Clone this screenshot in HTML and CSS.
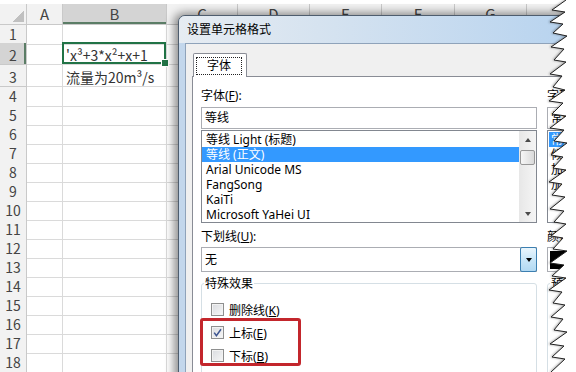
FILE: index.html
```html
<!DOCTYPE html>
<html lang="zh-CN">
<head>
<meta charset="UTF-8" />
<meta name="viewport" content="width=device-width, initial-scale=1" />
<title>设置单元格格式</title>
<link rel="stylesheet" href="styles.css">
</head>
<body>

<div class="sheet">
  <div class="row head">
    <div class="corner"></div><div>A</div><div class="sel-col">B</div><div>C</div><div>D</div><div>E</div><div>F</div><div>G</div><div></div>
  </div>
  <div class="row r1"><div class="rh">1</div><div></div><div></div><div></div></div>
  <div class="row r2"><div class="rh sel-row">2</div><div></div><div class="cell active">'x³+3*x²+x+1</div><div></div></div>
  <div class="row r3"><div class="rh">3</div><div></div><div class="cell">流量为20m³/s</div><div></div></div>
  <div class="row"><div class="rh">4</div><div></div><div></div><div></div></div>
  <div class="row"><div class="rh">5</div><div></div><div></div><div></div></div>
  <div class="row"><div class="rh">6</div><div></div><div></div><div></div></div>
  <div class="row"><div class="rh">7</div><div></div><div></div><div></div></div>
  <div class="row"><div class="rh">8</div><div></div><div></div><div></div></div>
  <div class="row"><div class="rh">9</div><div></div><div></div><div></div></div>
  <div class="row"><div class="rh">10</div><div></div><div></div><div></div></div>
  <div class="row"><div class="rh">11</div><div></div><div></div><div></div></div>
  <div class="row"><div class="rh">12</div><div></div><div></div><div></div></div>
  <div class="row"><div class="rh">13</div><div></div><div></div><div></div></div>
  <div class="row"><div class="rh">14</div><div></div><div></div><div></div></div>
  <div class="row"><div class="rh">15</div><div></div><div></div><div></div></div>
  <div class="row"><div class="rh">16</div><div></div><div></div><div></div></div>
  <div class="row"><div class="rh">17</div><div></div><div></div><div></div></div>
  <div class="row"><div class="rh">18</div><div></div><div></div><div></div></div>
</div>

<section class="dialog">
  <div class="titlebar">设置单元格格式</div>
  <div class="client">
    <div class="tabs"><div class="tab"><span class="focus">字体</span></div></div>
    <div class="panel">
      <div class="col col-main">
        <div class="lbl">字体(<u>F</u>):</div>
        <div class="field">等线</div>
        <div class="listbox">
          <ul class="items">
            <li>等线 Light (标题)</li>
            <li class="on">等线 (正文)</li>
            <li>Arial Unicode MS</li>
            <li>FangSong</li>
            <li>KaiTi</li>
            <li>Microsoft YaHei UI</li>
          </ul>
          <div class="vscroll">
            <span class="btn"><span class="arrow up"></span></span>
            <span class="thumb"></span>
            <span class="btn end"><span class="arrow down"></span></span>
          </div>
        </div>
        <div class="lbl gap">下划线(<u>U</u>):</div>
        <div class="combo"><span class="value">无</span><span class="drop"></span></div>
        <fieldset class="group">
          <legend>特殊效果</legend>
          <div class="check"><span class="box"></span><span>删除线(<u>K</u>)</span></div>
          <div class="mark">
            <div class="check">
              <span class="box">
                <svg viewBox="0 0 11 11" width="11" height="11"><path d="M2.2 5.6 L4.4 8.6 L9 2.2" fill="none" stroke="#3d5590" stroke-width="1.5"/></svg>
              </span><span>上标(<u>E</u>)</span>
            </div>
            <div class="check"><span class="box"></span><span>下标(<u>B</u>)</span></div>
          </div>
        </fieldset>
      </div>
      <div class="col col-side">
        <div class="lbl">字形(<u>O</u>):</div>
        <div class="field">常规</div>
        <div class="listbox">
          <ul class="items">
            <li class="on">常规</li>
            <li>倾斜</li>
            <li>加粗</li>
            <li>加粗 倾斜</li>
          </ul>
        </div>
        <div class="lbl gap">颜色(<u>C</u>):</div>
        <div class="combo"><span class="swatch"></span></div>
        <fieldset class="group">
          <legend>预览</legend>
        </fieldset>
      </div>
    </div>
  </div>
</section>

<!-- torn paper edge on the right -->
<svg class="tear" width="576" height="372" viewBox="0 0 576 372">
  <polygon points="566,-5 566,0 552,10 565,12 550,22 563,24 553,33 567,36 551,47 564,49 554,60 566,62 550,74 562,76 553,87 565,90 549,101 563,103 552,114 566,116 550,128 564,130 554,141 567,143 551,155 563,157 553,168 566,170 549,182 562,184 552,195 565,197 550,209 564,211 554,222 566,224 551,236 563,238 553,249 567,251 550,263 564,265 552,276 566,278 549,290 562,292 553,303 565,305 551,317 563,319 554,330 567,332 550,344 564,346 552,357 565,359 551,372 551,380 590,380 590,-5" fill="#fff" stroke="#222" stroke-width="1"/>
</svg>

</body>
</html>
```

FILE: styles.css
```css
* { box-sizing: border-box; }
body {
  margin: 0;
  width: 576px;
  height: 372px;
  overflow: hidden;
  position: relative;
  background: #fff;
  font-family: "Noto Sans CJK SC", sans-serif;
}

/* worksheet */
.sheet {
  padding-top: 4px;
  font-size: 14px;
  color: #333;
}
.row {
  display: grid;
  grid-template-columns: 27px 36px 104px 71px;
  height: 19px;
}
.row > div {
  border-right: 1px solid #dadada;
  border-bottom: 1px solid #dadada;
  line-height: 19px;
  white-space: nowrap;
}
.row.head {
  grid-template-columns: 27px 36px 104px 71px 72px 72px 73px 72px 72px;
  height: 21px;
  background: #f2f2f2;
}
.row.head > div {
  text-align: center;
  color: #444;
  font-size: 15px;
  line-height: 20px;
  border-color: #c9c9c9;
}
.row.head > .sel-col {
  background: #d4d4d4;
  box-shadow: inset 0 -2px 0 #5b7d66;
}
.corner {
  background: linear-gradient(to bottom right, transparent 50%, #c0c0c0 50%) no-repeat right 2px bottom 2px / 11px 12px;
}
.r1 { height: 18px; }
.r2, .r3 { height: 22px; }
.row > .rh {
  background: #f2f2f2;
  color: #444;
  text-align: center;
  border-color: #c9c9c9;
}
.r2 > div, .r3 > div {
  padding-top: 3px;
  line-height: 18px;
}
.row > .sel-row {
  background: #d4d4d4;
  box-shadow: inset -2px 0 0 #5b7d66;
}
.cell {
  padding-left: 3px;
  color: #333;
}
.active { position: relative; }
.active::before {
  content: "";
  position: absolute;
  left: -1px; top: -1px; right: 0; bottom: 0;
  border: 2px solid #217346;
}
.active::after {
  content: "";
  position: absolute;
  right: -3px; bottom: -3px;
  width: 6px; height: 6px;
  background: #217346;
  border: 1px solid #fff;
}

/* format cells dialog */
.dialog {
  position: absolute;
  left: 178px;
  top: 15px;
  width: 400px;
  height: 380px;
  padding-left: 6px;
  border: 1px solid #4e5d6e;
  border-radius: 7px 7px 0 0;
  background: #c3d7ec;
  box-shadow: -2px 0 10px 2px rgba(0, 0, 0, 0.45);
  font-family: "Noto Sans", "Noto Sans CJK SC", sans-serif;
  font-size: 12px;
  color: #000;
}
.titlebar {
  height: 27px;
  margin-left: -6px;
  padding-left: 8px;
  line-height: 28px;
  border-radius: 6px 6px 0 0;
  background: linear-gradient(to right, #e6ecf2, #d6e3f0 35%, #b7d3ef);
}
.client {
  height: 360px;
  padding: 9px 0 0 6px;
  background: #f0f0f0;
  border-top: 1px solid #8fa3ba;
  border-left: 1px solid #8fa3ba;
}
.tabs {
  display: flex;
  height: 23px;
}
.tab {
  position: relative;
  z-index: 1;
  height: 24px;
  margin-left: 1px;
  padding: 3px 4px 0 2px;
  background: #fff;
  border: 1px solid #898c95;
  border-bottom: 0;
  border-radius: 2px 2px 0 0;
}
.focus {
  display: block;
  padding: 0 10px;
  line-height: 16px;
  border: 1px dotted #222;
}
.panel {
  display: flex;
  gap: 10px;
  height: 320px;
  padding: 10px 0 0 8px;
  background: #fff;
  border: 1px solid #898c95;
  border-right: 0;
}
.col-main { width: 336px; flex: none; }
.col-side { width: 21px; flex: none; overflow: hidden; }

.lbl {
  height: 17px;
  line-height: 17px;
  white-space: nowrap;
}
.lbl.gap { margin-top: 5px; }
.field {
  margin-top: 3px;
  height: 22px;
  padding-left: 3px;
  line-height: 20px;
  border: 1px solid #abadb3;
  white-space: nowrap;
}
.col-side .field,
.col-side .listbox,
.col-side .combo,
.col-side .group { width: 60px; }
.listbox {
  display: flex;
  margin-top: 1px;
  height: 93px;
  border: 1px solid #828790;
}
.items {
  flex: 1;
  list-style: none;
  margin: 0;
  padding: 1px 0 0;
}
.items li {
  height: 15px;
  padding-left: 4px;
  line-height: 15px;
  white-space: nowrap;
}
.items li.on {
  background: #3399ff;
  color: #fff;
}
.col-side .items { padding: 1px 0 0 1px; }
.col-side .items li { padding-left: 2px; }
.vscroll {
  display: flex;
  flex-direction: column;
  align-items: center;
  width: 17px;
  background: linear-gradient(to right, #e7e7e7, #f5f5f5);
}
.btn {
  display: flex;
  align-items: center;
  justify-content: center;
  width: 17px;
  height: 17px;
}
.btn.end { margin-top: auto; }
.arrow {
  width: 0;
  height: 0;
  border-left: 3.5px solid transparent;
  border-right: 3.5px solid transparent;
}
.arrow.up { border-bottom: 4px solid #4a4a4a; }
.arrow.down { border-top: 4px solid #4a4a4a; }
.thumb {
  width: 15px;
  height: 15px;
  margin-top: 2px;
  border: 1px solid #979797;
  border-radius: 2px;
  background: linear-gradient(to right, #f6f6f6, #dadada);
}

.combo {
  display: flex;
  margin-top: 2px;
  height: 25px;
  border: 1px solid #abadb3;
}
.combo .value {
  flex: 1;
  padding-left: 3px;
  line-height: 23px;
}
.combo .drop {
  display: flex;
  align-items: center;
  justify-content: center;
  width: 17px;
  margin: -1px -1px -1px auto;
  border: 1px solid #3c7fb1;
  border-radius: 2px;
  background: linear-gradient(#eaf6fd, #c9e6f8 50%, #b2d9f2);
}
.combo .drop::before {
  content: "";
  border-left: 3.5px solid transparent;
  border-right: 3.5px solid transparent;
  border-top: 4px solid #000;
}
.combo .swatch {
  width: 40px;
  margin: 3px 2px 2px;
  background: #000;
}

.group {
  min-width: 0;
  height: 120px;
  margin: 3px 0 0;
  padding: 6px 8px 0 3px;
  border: 1px solid #d5dfe5;
  border-radius: 3px;
}
.group legend {
  margin-left: -1px;
  padding: 0 1px;
  line-height: 17px;
}
.check {
  display: flex;
  align-items: center;
  gap: 5px;
  height: 23px;
  padding-left: 6px;
  white-space: nowrap;
}
.box {
  display: flex;
  align-items: center;
  justify-content: center;
  width: 13px;
  height: 13px;
  border: 1px solid #8e8f8f;
  background: linear-gradient(135deg, #d9dbdf, #f7f7f7);
  box-shadow: inset 0 0 0 1px #f2f2f2;
}
.mark { position: relative; }
.mark::after {
  content: "";
  position: absolute;
  left: -5px;
  top: -3px;
  bottom: 1px;
  width: 95px;
  border: 3px solid #c3262c;
  border-radius: 3px;
}

.tear {
  position: absolute;
  left: 0;
  top: 0;
  z-index: 5;
  filter: drop-shadow(-1px 0 1px rgba(0, 0, 0, 0.35));
}
```
